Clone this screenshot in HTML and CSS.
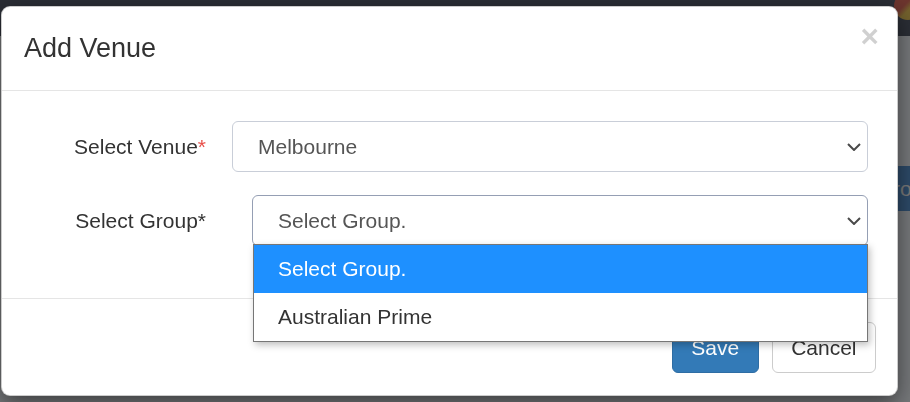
FILE: index.html
```html
<!DOCTYPE html>
<html lang="en">
<head>
<meta charset="utf-8">
<title>Add Venue</title>
<link rel="stylesheet" href="styles.css">
</head>
<body>
<div class="page">
  <header class="navbar"><span class="avatar"></span></header>
  <main class="content">
    <div class="toolbar"><button class="page-btn" type="button">Group</button></div>
  </main>
</div>
<div class="backdrop"></div>
<div class="modal">
  <div class="modal-header">
    <h4 class="modal-title">Add Venue</h4>
    <button class="close" type="button">&times;</button>
  </div>
  <div class="modal-body">
    <div class="form-row">
      <label class="form-label">Select Venue<span class="req">*</span></label>
      <div class="select select--venue">
        <span class="select-value">Melbourne</span>
        <svg class="chev" width="14" height="8" viewBox="0 0 14 8"><path d="M1 1 L7 7 L13 1" fill="none" stroke="#4a4a4a" stroke-width="2"/></svg>
      </div>
    </div>
    <div class="form-row">
      <label class="form-label">Select Group*</label>
      <div class="select select--group">
        <span class="select-value">Select Group.</span>
        <svg class="chev" width="14" height="8" viewBox="0 0 14 8"><path d="M1 1 L7 7 L13 1" fill="none" stroke="#4a4a4a" stroke-width="2"/></svg>
        <ul class="dropdown">
          <li class="option option--active">Select Group.</li>
          <li class="option">Australian Prime</li>
        </ul>
      </div>
    </div>
  </div>
  <div class="modal-footer">
    <button class="btn btn-primary" type="button">Save</button>
    <button class="btn btn-default" type="button">Cancel</button>
  </div>
</div>
</body>
</html>
```
FILE: styles.css
```css
* { box-sizing: border-box; }
html, body { margin: 0; height: 100%; }
body {
  font-family: "Liberation Sans", Arial, sans-serif;
  background: #ecf0f5;
  overflow: hidden;
}
.navbar {
  height: 36px;
  background: #565c6b;
  display: flex;
  justify-content: flex-end;
  overflow: hidden;
}
.avatar {
  width: 28px;
  height: 28px;
  border-radius: 50%;
  margin: -8px -12px 0 0;
  background: linear-gradient(135deg, #d86a5c 0 42%, #e6c25a 58%);
}
.content { padding-top: 130px; }
.toolbar { display: flex; justify-content: flex-end; }
.page-btn {
  height: 45px;
  margin-right: -43px;
  padding: 0 18px;
  background: #5a94d0;
  color: #f2f2f2;
  border: 0;
  font-family: "Liberation Sans", Arial, sans-serif;
  font-size: 21px;
}
.backdrop {
  position: fixed;
  inset: 0;
  background: rgba(0, 0, 0, 0.5);
}
.modal {
  position: fixed;
  top: 6px;
  left: 1px;
  width: 897px;
  background: #fff;
  border: 1px solid rgba(0, 0, 0, 0.2);
  border-radius: 9px;
  box-shadow: 0 7px 22px rgba(0, 0, 0, 0.5);
}
.modal-header {
  display: flex;
  align-items: flex-start;
  padding: 22px;
  border-bottom: 1px solid #e5e5e5;
}
.modal-title {
  margin: 0;
  font-size: 27px;
  line-height: 39px;
  font-weight: normal;
  color: #333;
}
.close {
  margin: -8px -4px 0 auto;
  padding: 0;
  background: none;
  border: 0;
  font-family: "Liberation Sans", Arial, sans-serif;
  font-size: 31.5px;
  font-weight: bold;
  line-height: 1;
  color: #000;
  opacity: 0.18;
}
.modal-body { padding: 30px 29px 52px 22px; }
.form-row {
  display: flex;
  align-items: center;
  margin-bottom: 23px;
}
.form-row:last-child { margin-bottom: 0; }
.form-label {
  flex: none;
  width: 182px;
  text-align: right;
  font-size: 21px;
  color: #333;
}
.req { color: #e8504a; }
.select {
  flex: 1;
  height: 51px;
  display: flex;
  align-items: center;
  padding: 0 6px 0 25px;
  border: 1px solid #c9ced8;
  border-radius: 6px;
  font-size: 21px;
  color: #555;
}
.select--venue { margin-left: 26px; }
.select--group {
  margin-left: 46px;
  position: relative;
  border-color: #959fb4;
}
.select-value { flex: 1; }
.chev { flex: none; }
.dropdown {
  position: absolute;
  top: 48px;
  left: 0;
  right: -1px;
  z-index: 2;
  margin: 0;
  padding: 0;
  list-style: none;
  background: #fff;
  border: 1px solid #767676;
  box-shadow: 2px 3px 7px rgba(0, 0, 0, 0.25);
}
.option {
  height: 48px;
  display: flex;
  align-items: center;
  padding-left: 24px;
  font-size: 21px;
  color: #333;
}
.option--active { background: #1e90ff; color: #fff; }
.modal-footer {
  display: flex;
  justify-content: flex-end;
  gap: 13px;
  padding: 23px 21px 22px;
  border-top: 1px solid #e5e5e5;
}
.btn {
  height: 51px;
  padding: 0 18.5px;
  border: 1px solid;
  border-radius: 6px;
  font-family: "Liberation Sans", Arial, sans-serif;
  font-size: 21px;
  line-height: 49px;
}
.btn-primary { background: #337ab7; border-color: #2e6da4; color: #fff; }
.btn-default { background: #fff; border-color: #ccc; color: #333; }
```
